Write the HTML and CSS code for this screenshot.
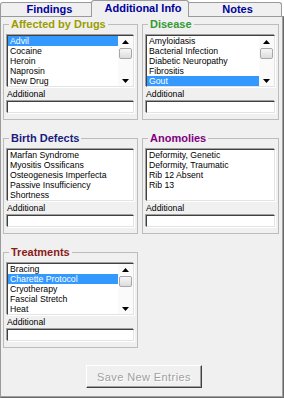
FILE: index.html
```html
<!DOCTYPE html>
<html lang="en">
<head>
    <meta charset="UTF-8">
    <title>Additional Info</title>
    <link rel="stylesheet" href="styles.css">
</head>
<body>
    <div class="tabs">
        <div class="tab">Findings</div>
        <div class="tab active">Additional Info</div>
        <div class="tab notes">Notes</div>
    </div>

    <div class="page">
        <div class="groups">
            <fieldset class="group">
                <legend class="drugs">Affected by Drugs</legend>
                <div class="listbox">
                    <ul class="items">
                        <li class="sel">Advil</li>
                        <li>Cocaine</li>
                        <li>Heroin</li>
                        <li>Naprosin</li>
                        <li>New Drug</li>
                    </ul>
                    <div class="vscroll">
                        <span class="arrow"><svg width="7" height="4"><path d="M0 4h7L3.5 0z"/></svg></span>
                        <span class="track"><span class="thumb"></span></span>
                        <span class="arrow"><svg width="7" height="4"><path d="M0 0h7L3.5 4z"/></svg></span>
                    </div>
                </div>
                <div class="field-label">Additional</div>
                <div class="textbox"></div>
            </fieldset>

            <fieldset class="group">
                <legend class="disease">Disease</legend>
                <div class="listbox">
                    <ul class="items">
                        <li>Amyloidasis</li>
                        <li>Bacterial Infection</li>
                        <li>Diabetic Neuropathy</li>
                        <li>Fibrositis</li>
                        <li class="sel">Gout</li>
                    </ul>
                    <div class="vscroll">
                        <span class="arrow"><svg width="7" height="4"><path d="M0 4h7L3.5 0z"/></svg></span>
                        <span class="track"><span class="thumb"></span></span>
                        <span class="arrow"><svg width="7" height="4"><path d="M0 0h7L3.5 4z"/></svg></span>
                    </div>
                </div>
                <div class="field-label">Additional</div>
                <div class="textbox"></div>
            </fieldset>

            <fieldset class="group">
                <legend class="birth">Birth Defects</legend>
                <div class="listbox">
                    <ul class="items">
                        <li>Marfan Syndrome</li>
                        <li>Myositis Ossificans</li>
                        <li>Osteogenesis Imperfecta</li>
                        <li>Passive Insufficiency</li>
                        <li>Shortness</li>
                    </ul>
                </div>
                <div class="field-label">Additional</div>
                <div class="textbox"></div>
            </fieldset>

            <fieldset class="group">
                <legend class="anomolies">Anomolies</legend>
                <div class="listbox">
                    <ul class="items">
                        <li>Deformity, Genetic</li>
                        <li>Deformity, Traumatic</li>
                        <li>Rib 12 Absent</li>
                        <li>Rib 13</li>
                    </ul>
                </div>
                <div class="field-label">Additional</div>
                <div class="textbox"></div>
            </fieldset>

            <fieldset class="group">
                <legend class="treatments">Treatments</legend>
                <div class="listbox">
                    <ul class="items">
                        <li>Bracing</li>
                        <li class="sel">Charette Protocol</li>
                        <li>Cryotherapy</li>
                        <li>Fascial Stretch</li>
                        <li>Heat</li>
                    </ul>
                    <div class="vscroll">
                        <span class="arrow"><svg width="7" height="4"><path d="M0 4h7L3.5 0z"/></svg></span>
                        <span class="track"><span class="thumb"></span></span>
                        <span class="arrow"><svg width="7" height="4"><path d="M0 0h7L3.5 4z"/></svg></span>
                    </div>
                </div>
                <div class="field-label">Additional</div>
                <div class="textbox"></div>
            </fieldset>
        </div>

        <div class="actions">
            <button class="btn" disabled>Save New Entries</button>
        </div>
    </div>
</body>
</html>
```

FILE: styles.css
```css
body {
    margin: 0;
    width: 284px;
    height: 398px;
    overflow: hidden;
    background-color: #fff;
    font-family: "Liberation Sans", Arial, sans-serif;
}

/* tab strip */

.tabs {
    display: flex;
    align-items: flex-end;
    height: 16px;
}

.tab {
    box-sizing: border-box;
    width: 93px;
    height: 14px;
    padding-left: 6px;
    border: 1px solid #9a9a9a;
    border-bottom: none;
    border-radius: 3px 3px 0 0;
    background-color: #f0f0f0;
    color: #00009c;
    font-size: 11px;
    font-weight: bold;
    line-height: 12px;
    text-align: center;
}

.tab.active {
    position: relative;
    z-index: 2;
    width: 98px;
    height: 17px;
    margin: 0 -2px -1px;
    line-height: 14px;
}

.tab.notes {
    width: 95px;
}

/* tab page */

.page {
    box-sizing: border-box;
    height: 382px;
    border: 1px solid #9a9a9a;
    border-right-color: #696969;
    border-bottom-color: #696969;
    box-shadow: inset -1px -1px #a0a0a0;
    background-color: #f0f0f0;
}

.groups {
    display: grid;
    grid-template-columns: 135px 137px;
    column-gap: 4px;
    row-gap: 12px;
    padding: 1px 0 0 2px;
}

.group {
    min-width: 0;
    margin: 0;
    padding: 5px 3px 6px;
    border: 1px solid #bcbcbc;
}

.group legend {
    margin-left: 2px;
    padding: 0 2px;
    font-size: 11px;
    font-weight: bold;
    line-height: 12px;
}

.drugs { color: #9c9c00; }
.disease { color: #339933; }
.birth { color: #1a1a80; }
.anomolies { color: #800080; }
.treatments { color: #8b1a1a; }

/* list boxes */

.listbox {
    display: flex;
    height: 52px;
    box-sizing: border-box;
    border: 1px solid;
    border-color: #404040 #e3e3e3 #e3e3e3 #404040;
    box-shadow: -1px -1px #a0a0a0, 1px 1px #fff;
    background-color: #fff;
}

.items {
    flex: 1;
    margin: 0;
    padding: 0;
    list-style: none;
    font-size: 8.7px;
    line-height: 10px;
    color: #000;
}

.items li {
    height: 10px;
    padding-left: 2px;
    white-space: nowrap;
}

.items li.sel {
    background-color: #3399ff;
    color: #fff;
}

.vscroll {
    display: flex;
    flex-direction: column;
    width: 15px;
    background-color: #fafafa;
}

.arrow {
    display: flex;
    align-items: center;
    justify-content: center;
    height: 11px;
}

.arrow svg {
    fill: #000;
}

.track {
    flex: 1;
}

.thumb {
    display: block;
    height: 11px;
    margin: 1px 1px 0;
    box-sizing: border-box;
    border: 1px solid #a7a7a7;
    border-radius: 2px;
    background: linear-gradient(#f7f7f7, #dcdcdc);
}

/* additional text field */

.field-label {
    margin-top: 2px;
    font-size: 8.7px;
    line-height: 11px;
    color: #000;
}

.textbox {
    height: 12px;
    margin-top: 1px;
    box-sizing: border-box;
    border: 1px solid;
    border-color: #404040 #e3e3e3 #e3e3e3 #404040;
    box-shadow: -1px -1px #a0a0a0, 1px 1px #fff;
    background-color: #fff;
}

/* save button */

.actions {
    display: flex;
    justify-content: center;
    margin-top: 17px;
    padding-left: 4px;
}

.btn {
    width: 116px;
    height: 23px;
    padding: 0;
    border: 1px solid;
    border-color: #fff #404040 #404040 #fff;
    box-shadow: inset -1px -1px #a0a0a0;
    background-color: #f0f0f0;
    color: #a0a0a0;
    text-shadow: 1px 1px #fff;
    font-family: "Liberation Sans", Arial, sans-serif;
    font-size: 11px;
    letter-spacing: 0.4px;
}
```
